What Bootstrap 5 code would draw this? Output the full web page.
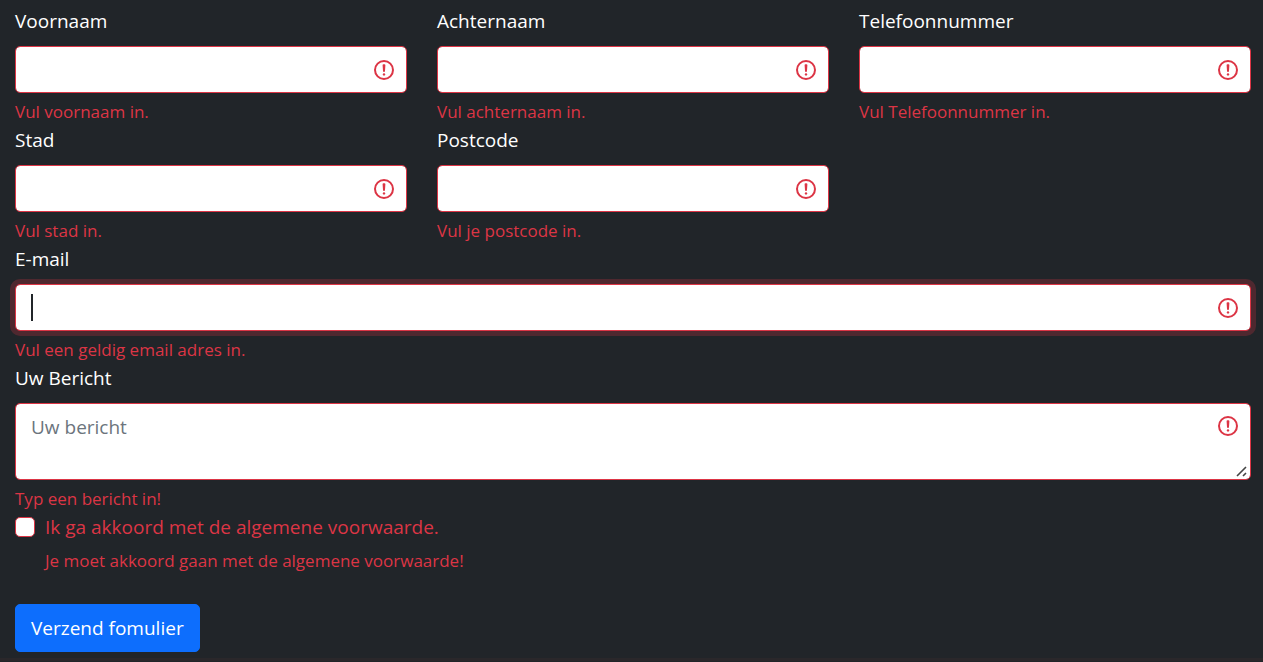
<!DOCTYPE html>
<html lang="nl">
<head>
<meta charset="utf-8">
<meta name="viewport" content="width=device-width, initial-scale=1">
<title>Contactformulier</title>
<link href="https://cdn.jsdelivr.net/npm/bootstrap@5.3.0/dist/css/bootstrap.min.css" rel="stylesheet">
<style>
  html { font-size: 20px; }
  body { background: #212529; color: #fff; font-family: "Open Sans", "Noto Sans", sans-serif; }
  .contact-form { padding: 6px 12px 6px 15px; border-bottom: 3px solid #2a272a; }
  .contact-form .row { --bs-gutter-x: 30px; }
  .form-label, .form-check-label, .form-control, .btn { font-size: 19px; line-height: 30px; }
  .form-label { display: block; margin-bottom: 10px; }
  .form-control, .form-control:focus {
    padding: 8px 15px;
    border-radius: 5px;
    background-color: #fff;
    color: #212529;
  }
  input.form-control { height: 47px; }
  textarea.form-control { height: 77px; min-height: 77px; }
  .form-control.is-invalid { border-color: #dc3545; background-size: 24px 24px; background-position: right 10px center; }
  textarea.form-control.is-invalid { background-position: right 10px top 10px; }
  textarea::-webkit-resizer {
    background: no-repeat center / 15px 15px url("data:image/svg+xml,%3Csvg xmlns='http://www.w3.org/2000/svg' viewBox='0 0 15 15'%3E%3Cpath d='M2 12 11 3M8 12l3-3' stroke='%23444' stroke-width='1.6' fill='none'/%3E%3C/svg%3E");
  }
  /* steady text cursor in the field that has focus */
  input.form-control.is-invalid:focus {
    caret-color: transparent;
    background-image: linear-gradient(#212529, #212529), url("data:image/svg+xml,%3Csvg xmlns='http://www.w3.org/2000/svg' viewBox='0 0 12 12' width='12' height='12' fill='none' stroke='%23dc3545'%3E%3Ccircle cx='6' cy='6' r='4.5'/%3E%3Cpath stroke-linejoin='round' d='M5.8 3.6h.4L6 6.5z'/%3E%3Ccircle cx='6' cy='8.2' r='.6' fill='%23dc3545' stroke='none'/%3E%3C/svg%3E");
    background-size: 2px 27px, 24px 24px;
    background-position: left 15px center, right 10px center;
    background-repeat: no-repeat;
  }
  .form-control::placeholder { color: #6c757d; }
  .invalid-feedback { margin-top: 6px; font-size: 17px; line-height: 26px; color: #dc3545; }
  .form-check { padding-left: 30px; margin: 0; min-height: 30px; }
  .form-check .form-check-input { width: 20px; height: 20px; margin: 5px 0 0 -30px; border-radius: 5px; background-color: #fff; }
  .form-check-input.is-invalid ~ .form-check-label { color: #dc3545; }
  .btn { padding: 8px 15px; border-radius: 5px; margin-top: 30px; }
  .btn-primary { --bs-btn-bg: #0d6efd; --bs-btn-border-color: #0d6efd; }
</style>
</head>
<body>
<form class="container-fluid contact-form" novalidate>
  <div class="row">
    <div class="col-4">
      <label class="form-label" for="voornaam">Voornaam</label>
      <input type="text" class="form-control is-invalid" id="voornaam">
      <div class="invalid-feedback">Vul voornaam in.</div>
    </div>
    <div class="col-4">
      <label class="form-label" for="achternaam">Achternaam</label>
      <input type="text" class="form-control is-invalid" id="achternaam">
      <div class="invalid-feedback">Vul achternaam in.</div>
    </div>
    <div class="col-4">
      <label class="form-label" for="telefoon">Telefoonnummer</label>
      <input type="tel" class="form-control is-invalid" id="telefoon">
      <div class="invalid-feedback">Vul Telefoonnummer in.</div>
    </div>
    <div class="col-4">
      <label class="form-label" for="stad">Stad</label>
      <input type="text" class="form-control is-invalid" id="stad">
      <div class="invalid-feedback">Vul stad in.</div>
    </div>
    <div class="col-4">
      <label class="form-label" for="postcode">Postcode</label>
      <input type="text" class="form-control is-invalid" id="postcode">
      <div class="invalid-feedback">Vul je postcode in.</div>
    </div>
    <div class="col-12">
      <label class="form-label" for="email">E-mail</label>
      <input type="email" class="form-control is-invalid" id="email" autofocus>
      <div class="invalid-feedback">Vul een geldig email adres in.</div>
    </div>
    <div class="col-12">
      <label class="form-label" for="bericht">Uw Bericht</label>
      <textarea class="form-control is-invalid" id="bericht" rows="2" placeholder="Uw bericht"></textarea>
      <div class="invalid-feedback">Typ een bericht in!</div>
    </div>
    <div class="col-12">
      <div class="form-check">
        <input type="checkbox" class="form-check-input is-invalid" id="akkoord">
        <label class="form-check-label" for="akkoord">Ik ga akkoord met de algemene voorwaarde.</label>
        <div class="invalid-feedback">Je moet akkoord gaan met de algemene voorwaarde!</div>
      </div>
    </div>
    <div class="col-12">
      <button type="submit" class="btn btn-primary">Verzend fomulier</button>
    </div>
  </div>
</form>
<script src="https://cdn.jsdelivr.net/npm/bootstrap@5.3.0/dist/js/bootstrap.bundle.min.js"></script>
</body>
</html>
